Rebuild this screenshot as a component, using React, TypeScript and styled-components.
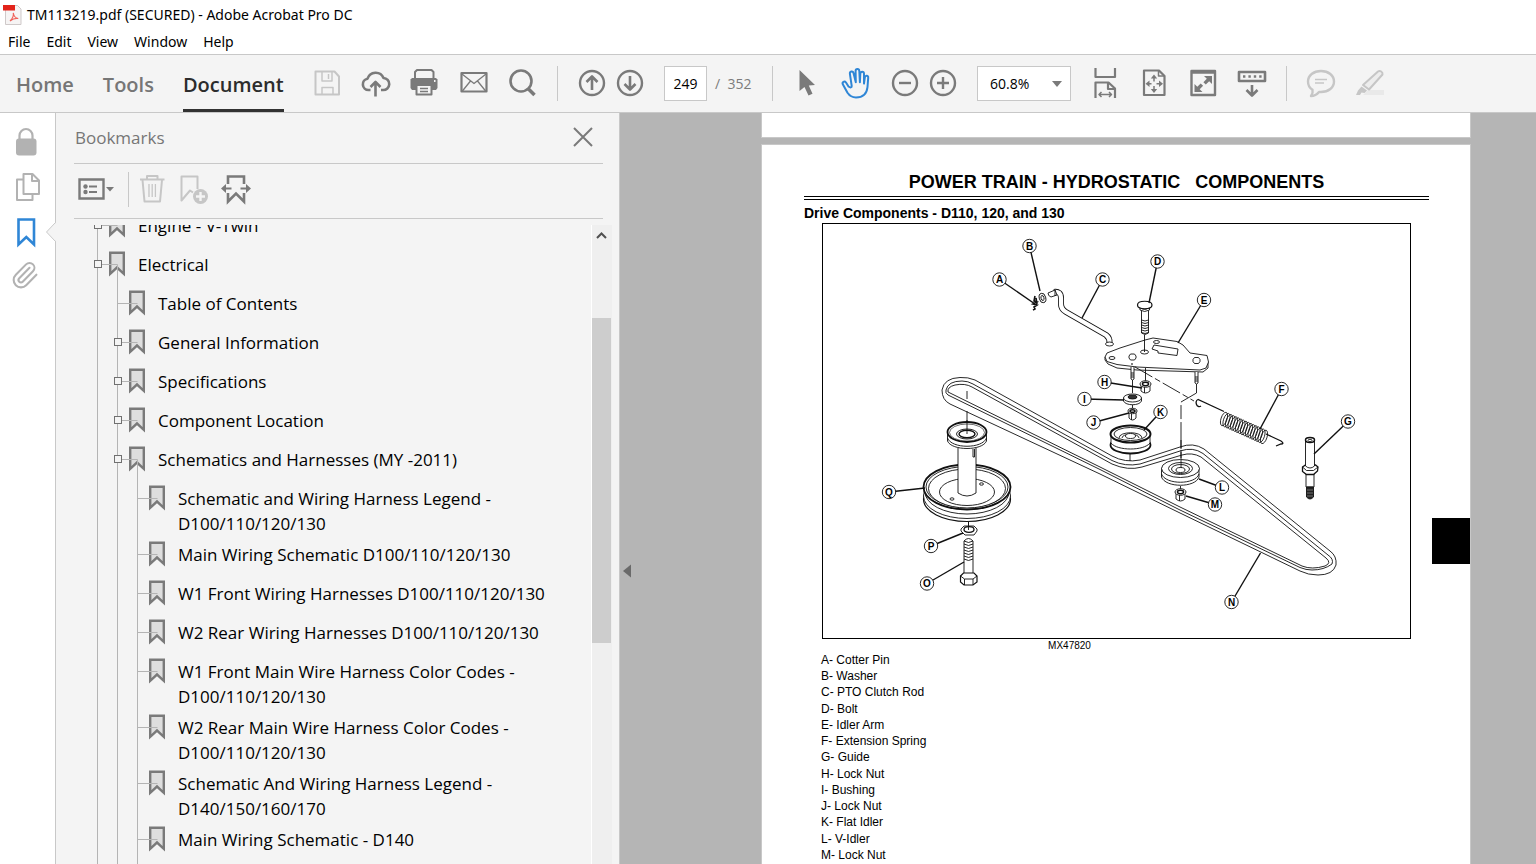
import React from "react";
import styled, { createGlobalStyle } from "styled-components";

const ui = `"Segoe UI", "Open Sans", "Noto Sans", sans-serif`;
const caption = `"Segoe UI", "Noto Sans", sans-serif`;
const doc = `"Liberation Sans", Arial, sans-serif`;
const line = "#c8c8c8";
const ink = "#7a7a7a";
const faint = "#c6c6c6";
const blue = "#2f86d6";
const chrome = "#f4f4f4";

const Global = createGlobalStyle`
  * { box-sizing: border-box; }
  body { margin: 0; background: #fff; font-family: ${ui}; color: #000; }
  button { border: 0; padding: 0; background: none; font: inherit; color: inherit; cursor: pointer; }
  ul { list-style: none; margin: 0; padding: 0; }
  a { color: inherit; text-decoration: none; }
  svg { display: block; }
`;

const Window = styled.div`
  height: 100vh;
  display: flex;
  flex-direction: column;
  overflow: hidden;
`;
const TitleBar = styled.header`
  flex: none;
  display: flex;
  align-items: center;
  gap: 5px;
  height: 30px;
  padding-left: 3px;
  font-family: ${caption};
`;
const Title = styled.h1`
  margin: 0;
  font-size: 14px;
  line-height: 20px;
  font-weight: 400;
  white-space: nowrap;
`;
const MenuBar = styled.nav`
  flex: none;
  display: flex;
  gap: 16px;
  height: 24px;
  padding-left: 8px;
  font-family: ${caption};
  font-size: 14px;
  line-height: 24px;
`;
const Toolbar = styled.div`
  flex: none;
  display: flex;
  align-items: center;
  height: 59px;
  padding-bottom: 1px;
  background: ${chrome};
  border-top: 1px solid ${line};
  border-bottom: 1px solid ${line};
`;
const Tabs = styled.nav`
  flex: 0 0 309px;
  align-self: stretch;
  display: flex;
  gap: 29px;
  padding-left: 16px;
`;
const Tab = styled.button<{ $active?: boolean }>`
  height: 57px;
  padding-top: 5px;
  font-size: 20px;
  font-weight: 600;
  color: ${p => (p.$active ? "#2c2c2c" : "#767676")};
  border-bottom: 3px solid ${p => (p.$active ? "#323232" : "transparent")};
`;
const Group = styled.div<{ $gap: number }>`
  display: flex;
  align-items: center;
  gap: ${p => p.$gap}px;
`;
const ToolButton = styled.button<{ $tone?: string; $width?: number }>`
  width: ${p => p.$width ?? 36}px;
  height: 36px;
  display: flex;
  align-items: center;
  justify-content: center;
  flex: none;
  color: ${p => p.$tone ?? ink};
`;
const Divider = styled.span`
  flex: none;
  width: 1px;
  height: 35px;
  margin: 0 16px;
  background: ${line};
`;
const PageBox = styled.input`
  width: 43px;
  height: 35px;
  margin-left: 16px;
  padding: 0;
  border: 1px solid ${line};
  background: #fff;
  text-align: center;
  font: 14px ${ui};
  color: #000;
`;
const PageTotal = styled.span`
  width: 49px;
  padding-left: 8px;
  font-size: 14px;
  color: #7c7c7c;
  white-space: pre;
`;
const ZoomField = styled.label`
  position: relative;
  width: 94px;
  height: 35px;
  margin: 0 16px;
  svg {
    position: absolute;
    right: 9px;
    top: 15px;
    pointer-events: none;
  }
`;
const ZoomSelect = styled.select`
  appearance: none;
  width: 100%;
  height: 100%;
  padding: 0 12px;
  border: 1px solid ${line};
  border-radius: 0;
  background: #fff;
  font: 14px ${ui};
  color: #000;
`;
const Body = styled.div`
  flex: 1;
  min-height: 0;
  display: flex;
`;
const Rail = styled.nav`
  position: relative;
  flex: 0 0 56px;
  display: flex;
  flex-direction: column;
  gap: 13px;
  padding: 13px 0 0 10px;
  background: #fff;
  border-right: 1px solid ${line};
`;
const RailButton = styled.button<{ $tone?: string }>`
  width: 32px;
  height: 32px;
  color: ${p => p.$tone ?? "#b2b2b2"};
`;
const Notch = styled.svg`
  position: absolute;
  right: -1px;
  top: 109px;
`;
const Panel = styled.aside`
  flex: 0 0 564px;
  display: flex;
  flex-direction: column;
  min-height: 0;
  padding-left: 18px;
  background: ${chrome};
  border-right: 1px solid ${line};
`;
const PanelHeader = styled.div`
  flex: none;
  display: flex;
  align-items: center;
  justify-content: space-between;
  height: 51px;
  margin-right: 16px;
  padding: 0 8px 2px 1px;
  border-bottom: 1px solid ${line};
`;
const PanelTitle = styled.h2`
  margin: 0;
  font-size: 17px;
  font-weight: 400;
  color: #767676;
`;
const PanelTools = styled.div`
  flex: none;
  display: flex;
  align-items: center;
  height: 55px;
  margin: 0 16px 6px 0;
  padding: 0 0 4px 4px;
  border-bottom: 1px solid ${line};
  ${Divider} { margin: 0 7px 0 13px; }
`;
const TreeArea = styled.div`
  flex: 1;
  min-height: 0;
  display: flex;
  margin-right: 7px;
`;
const TreeView = styled.div`
  flex: 1;
  min-width: 0;
  overflow: hidden;
  padding-left: 23px;
  border-right: 1px solid #fff;
`;
const Branch = styled.ul<{ $root?: boolean }>`
  margin: ${p => (p.$root ? "-18px 0 0 0" : "0 0 0 19px")};
  padding-bottom: ${p => (p.$root ? 0 : 20)}px;
  border-left: 1px solid #b4b4b4;
`;
const Item = styled.a`
  display: flex;
  min-height: 39px;
  font-size: 17px;
  line-height: 25px;
`;
const Marker = styled.svg`
  flex: none;
  margin-left: -4px;
`;
const ItemText = styled.span`
  padding: 6px 8px 0 12px;
`;
const ScrollBar = styled.div`
  flex: 0 0 20px;
  background: #efefef;
`;
const ScrollUp = styled.button`
  display: block;
  height: 22px;
  width: 19px;
`;
const Thumb = styled.div`
  width: 19px;
  height: 325px;
  margin-top: 71px;
  background: #cdcdcd;
`;
const Viewer = styled.main`
  flex: 1;
  min-width: 0;
  display: flex;
  background: #b5b5b5;
`;
const Handle = styled.button`
  flex: 0 0 14px;
  align-self: flex-start;
  height: 28px;
  margin-top: 444px;
`;
const Pages = styled.div`
  flex: 1;
  min-width: 0;
  display: flex;
  flex-direction: column;
  gap: 6px;
  padding: 0 65px 0 127px;
`;
const PreviousPage = styled.div`
  flex: none;
  height: 25px;
  background: #fff;
  border: 1px solid ${line};
  border-top: 0;
`;
const Page = styled.article`
  position: relative;
  flex: none;
  min-height: 900px;
  padding: 25px 41px 0 42px;
  background: #fff;
  border: 1px solid ${line};
  font-family: ${doc};
`;
const PageHeading = styled.h2`
  margin: 0;
  font-size: 18px;
  line-height: 24px;
  font-weight: 700;
  text-align: center;
  white-space: pre;
`;
const DoubleRule = styled.div`
  height: 4px;
  margin: 2px 0 4px;
  border-top: 1px solid #000;
  border-bottom: 1px solid #000;
`;
const SubHeading = styled.h3`
  margin: 0 0 1px;
  font-size: 14px;
  line-height: 18px;
  font-weight: 700;
`;
const Figure = styled.figure`
  margin: 0 18px;
  svg {
    width: 100%;
    height: auto;
    border: 1px solid #000;
  }
  figcaption {
    padding-right: 94px;
    font-size: 10px;
    line-height: 13px;
    text-align: center;
  }
`;
const PartList = styled.ul`
  display: grid;
  grid-auto-rows: 1fr;
  min-height: 211px;
  margin-left: 17px;
  font-size: 12px;
  line-height: 16px;
`;
const IndexTab = styled.span`
  position: absolute;
  right: 0;
  top: 373px;
  width: 38px;
  height: 46px;
  background: #000;
`;

const Icon = ({ children, w = 2.4, size = 32 }: { children: React.ReactNode; w?: number; size?: number }) => (
  <svg width={size} height={size} viewBox="0 0 32 32" fill="none" stroke="currentColor" strokeWidth={w} strokeLinejoin="round" aria-hidden="true">
    {children}
  </svg>
);

const PdfLogo = () => (
  <svg width="19" height="20" viewBox="0 0 19 20" aria-hidden="true">
    <path d="M2.500.5h12l3.500 3.500v15.500H2.500z" fill="#f6f4f4" stroke="#cfc9c9" />
    <path d="M0 0h12v5.500H0z" fill="#e2231a" />
    <path d="M7 16c2-2 4-5 3.300-8 .4 3 2 5 5 5.500-3-.5-5.500.3-8.300 2.500z" fill="none" stroke="#f0625a" strokeWidth="1.200" />
  </svg>
);
const Save = () => (
  <Icon w={2}>
    <path d="M4.500 4.500h19l4.500 5v18h-23.500z" />
    <path d="M11 5v9h10V5M17.500 7v5M11 27v-6.500h11V27" strokeWidth="1.500" />
  </Icon>
);
const Cloud = () => (
  <Icon w={2.600}>
    <path d="M10.500 23H8.500a5.700 5.700 0 0 1-1-11.300A8.500 8.500 0 0 1 23.500 11a6 6 0 0 1-.5 12h-2" />
    <path d="M15.500 29.500V15.500M10.500 20l5-5 5 5" />
  </Icon>
);
const Printer = () => (
  <Icon w={2}>
    <path d="M6 11V5l2-2h14.500L24.500 5v6" />
    <path d="M3 11h24l1.500 1.500V21L27 23H3l-1.500-2v-8.500z" fill="currentColor" stroke="none" />
    <path d="M7.500 18h15v9.500h-15z" fill={chrome} />
    <path d="M11 21.500h8M11 24.500h8" strokeWidth="1.300" />
    <path d="M25 14h1.500" stroke={chrome} />
  </Icon>
);
const Mail = () => (
  <Icon w={2.200}>
    <path d="M3.500 6h25v18.500h-25z" />
    <path d="M4 7l12 9.500L28 7M4 24.500l8.500-10.500M28 24.500L19.500 14" strokeWidth="1.300" />
  </Icon>
);
const Search = () => (
  <Icon w={2.600}>
    <circle cx="14" cy="14" r="10.500" />
    <path d="M21 21.500l6.500 6.500" strokeWidth="3.600" />
  </Icon>
);
const ArrowUp = () => (
  <Icon>
    <circle cx="16" cy="16" r="12" />
    <path d="M16 23V9.500M10.500 15L16 9.500l5.500 5.500" strokeWidth="2.600" />
  </Icon>
);
const ArrowDown = () => (
  <Icon>
    <circle cx="16" cy="16" r="12" />
    <path d="M16 9v13.500M10.500 17l5.500 5.500 5.500-5.500" strokeWidth="2.600" />
  </Icon>
);
const Pointer = () => (
  <Icon>
    <path d="M8.500 3v21l5-4 4 8.500 4-1.700-3.700-8.300 6.200-.5z" fill="currentColor" stroke="none" />
  </Icon>
);
const Hand = () => (
  <Icon w={2}>
    <path d="M8.500 19.500l-2.500-4c-1.500-2-4.200-.5-3.200 1.800l4.700 8.500c2 3 4 4.700 8.500 4.700 6.500 0 10.800-3.500 11.500-10.500l.7-9.200c.2-2.500-3-2.800-3.400-.3l-.8 6v-9.700c0-2.700-3.500-2.700-3.700 0l-.4 8.500-.6-11.300c-.2-2.600-3.700-2.500-3.700.2l.2 11-2.300-9.200c-.6-2.500-4-1.800-3.600.8l1.800 12c.2 1.800-1.200 2.200-3.200.7z" />
  </Icon>
);
const ZoomOut = () => (
  <Icon>
    <circle cx="16" cy="16" r="12" />
    <path d="M10 16h12" />
  </Icon>
);
const ZoomIn = () => (
  <Icon>
    <circle cx="16" cy="16" r="12" />
    <path d="M10 16h12M16 10v12" />
  </Icon>
);
const FitWidth = () => (
  <Icon w={2.200}>
    <path d="M6.500 1v9h19.500V1M6.500 31V15.500h13l6.500 6V31M19 16v6h7" />
    <path d="M10 27.500h12.500M12.500 25L10 27.500l2.500 2.500M20 25l2.500 2.500L20 30" strokeWidth="1.500" />
  </Icon>
);
const FitPage = () => (
  <Icon w={2.200}>
    <path d="M6 3.500h15l5.500 5.500v19H6z" />
    <path d="M20.500 3.500V9h6" strokeWidth="1.500" />
    <path d="M16 10v4.500M16 19v5M9 16.700h4.500M18.500 16.700h5" strokeWidth="1.500" />
    <path d="M16 7.500l3.200 4h-6.400zM16 26l3.200-4h-6.400zM7.500 16.700l4-3.200v6.400zM25 16.700l-4-3.200v6.400z" fill="currentColor" stroke="none" />
  </Icon>
);
const FullScreen = () => (
  <Icon w={2.400}>
    <path d="M4.500 4h23.500v24H4.500z" />
    <path d="M4 5.500h24" strokeWidth="2.500" />
    <path d="M25 9v8l-2.800-2.800-3.400 3.400-2.400-2.400 3.400-3.400L17 9zM7.500 25v-8l2.800 2.800 3.400-3.400 2.400 2.400-3.400 3.400 2.800 2.800z" fill="currentColor" stroke="none" />
  </Icon>
);
const Keyboard = () => (
  <Icon w={2.600}>
    <path d="M3 5h26v9H3z" />
    <path d="M7 9.500h19" strokeDasharray="2.400 3" />
    <path d="M16 18v10M10.500 23l5.500 5.500 5.500-5.500" />
  </Icon>
);
const Comment = () => (
  <Icon>
    <path d="M16 4c7.500 0 13 4.500 13 10.500S23.500 25 16 25l-2 0c-2 2.500-4.500 4-8 4 1.500-2 2-4 1.500-6.200C4.500 21 3 18 3 14.500 3 8.500 8.500 4 16 4z" />
    <path d="M10 12.500h12M10 16h9" strokeWidth="1.500" />
  </Icon>
);
const Highlighter = () => (
  <Icon w={2}>
    <path d="M14 23h16v5H9z" fill="#e9e9e9" stroke="none" />
    <path d="M24 4.500c2-1.500 5 .5 4.500 3L15 22.500l-6-4.500z" fill="#ededed" />
    <path d="M7.500 19.500l5.500 4-2.500 2.500-3-.5-1.500 2.500H2l2-4.500z" fill="currentColor" stroke="none" />
  </Icon>
);
const Lock = () => (
  <Icon w={2.200}>
    <path d="M9.500 13V9.500a6.500 6.500 0 0 1 13 0V13" />
    <rect x="6" y="12.500" width="20.500" height="17" rx="3" fill="currentColor" stroke="none" />
  </Icon>
);
const Copy = () => (
  <Icon w={2}>
    <path d="M13.500 3h9l6.500 6.500v13.500H13.500z" />
    <path d="M22 3v7h7M13 8.500H7v20.500h15.500v-5" />
  </Icon>
);
const BookmarkOutline = () => (
  <Icon w={2.600}>
    <path d="M8.500 3.500h15.500v25l-7.700-7.500-7.800 7.500z" strokeLinejoin="miter" />
  </Icon>
);
const Clip = () => (
  <Icon w={1.700}>
    <g transform="translate(0 -.5) scale(1.220)" strokeLinecap="round">
      <path d="m16 6-8.414 8.586a2 2 0 0 0 2.829 2.829l8.414-8.586a4 4 0 1 0-5.657-5.657l-8.379 8.551a6 6 0 1 0 8.485 8.485l8.379-8.551" />
    </g>
  </Icon>
);
const ListOptions = () => (
  <svg width="37" height="32" viewBox="0 0 37 32" fill="none" stroke="currentColor" strokeWidth="2.400" aria-hidden="true">
    <path d="M1.500 6.500h24v19h-24z" />
    <path d="M11 13.500h8M11 19h8" strokeWidth="1.800" />
    <circle cx="7.500" cy="13.500" r="2.200" fill="currentColor" stroke="none" />
    <circle cx="7.500" cy="19" r="2.200" fill="currentColor" stroke="none" />
    <path d="M28 14h8l-4 4.500z" fill="currentColor" stroke="none" />
  </svg>
);
const Trash = () => (
  <Icon w={2}>
    <path d="M4 6.500h24.500M6.500 7l2 21.500h15.500L26 7M11 6V3h10.500v3" />
    <path d="M13 11v13M16.200 11v13M19.400 11v13" strokeWidth="1.300" />
  </Icon>
);
const BookmarkAdd = () => (
  <Icon w={2}>
    <path d="M15 19.500l-3-2-8.500 10V3.500h16V16" />
    <circle cx="22.500" cy="23.500" r="7.500" fill="currentColor" stroke="none" />
    <path d="M22.500 19v9M18 23.500h9" stroke={chrome} strokeWidth="2.400" />
  </Icon>
);
const BookmarkExpand = () => (
  <Icon w={2.600}>
    <path d="M8 11V3.500h16V11M8 20v8.500l8-8 8 8V20" strokeLinejoin="miter" />
    <path d="M5 15.500h6.500M20.500 15.500H27" strokeWidth="2.200" />
    <path d="M1 15.500l5-4.500v9zM31 15.500L26 11v9z" fill="currentColor" stroke="none" />
  </Icon>
);

type Node = { label: string; leaf?: boolean; children?: Node[] };
const leaf = (label: string): Node => ({ label, leaf: true });
const bookmarks: Node[] = [
  { label: "Engine - V-Twin" },
  {
    label: "Electrical",
    children: [
      leaf("Table of Contents"),
      { label: "General Information" },
      { label: "Specifications" },
      { label: "Component Location" },
      {
        label: "Schematics and Harnesses (MY -2011)",
        children: [
          leaf("Schematic and Wiring Harness Legend - D100/110/120/130"),
          leaf("Main Wiring Schematic D100/110/120/130"),
          leaf("W1 Front Wiring Harnesses D100/110/120/130"),
          leaf("W2 Rear Wiring Harnesses D100/110/120/130"),
          leaf("W1 Front Main Wire Harness Color Codes - D100/110/120/130"),
          leaf("W2 Rear Main Wire Harness Color Codes - D100/110/120/130"),
          leaf("Schematic And Wiring Harness Legend - D140/150/160/170"),
          leaf("Main Wiring Schematic - D140"),
        ],
      },
    ],
  },
];

const Tree = ({ nodes, root }: { nodes: Node[]; root?: boolean }) => (
  <Branch $root={root}>
    {nodes.map(node => (
      <li key={node.label}>
        <Item href="#">
          <Marker width="32" height="39" viewBox="0 0 32 39" fill="none" aria-hidden="true">
            <path d="M16.200 6.800h13.600v21l-6.800-6.300-6.800 6.300z" fill="#dedede" stroke={ink} strokeWidth="2.400" />
            <path d={node.children ? "M4 18.500H23.500V39" : "M4 18.500H23.500"} stroke="#b4b4b4" />
            {!node.leaf && <rect x=".5" y="14.500" width="7" height="7" fill={chrome} stroke="#707070" />}
          </Marker>
          <ItemText>{node.label}</ItemText>
        </Item>
        {node.children && <Tree nodes={node.children} />}
      </li>
    ))}
  </Branch>
);

type Callout = [string, number, number, number, number];
const callouts: Callout[] = [
  ["A", 999.5, 279.5, 1035, 304], ["B", 1029.5, 246, 1040, 291], ["C", 1102.5, 279.5, 1082, 318],
  ["D", 1157.5, 261.5, 1149, 303], ["E", 1204, 300, 1178, 343], ["F", 1281.5, 389, 1260, 429],
  ["G", 1348, 421.5, 1314, 454], ["H", 1104.5, 382, 1142, 388], ["I", 1084.5, 399, 1124, 400],
  ["J", 1093.5, 422.5, 1129, 413], ["K", 1160.5, 412, 1144, 430], ["L", 1222, 487.5, 1199, 479],
  ["M", 1215, 504.5, 1186, 496], ["N", 1231.5, 602, 1260.5, 553], ["O", 927, 583.5, 964, 562],
  ["P", 931, 546, 963, 533], ["Q", 889, 492, 925, 488],
];

const Nut = ({ x, y, r = 5 }: { x: number; y: number; r?: number }) => (
  <g>
    <path d={`M${x - r + 1} ${y}v7q${r - 1} 4 ${2 * r - 2} 0v-7zM${x - 1} ${y + 3}v6`} />
    <ellipse cx={x} cy={y} rx={r} ry={r * 0.6} />
    <ellipse cx={x} cy={y} rx={r * 0.55} ry={r * 0.3} strokeWidth="1.500" />
  </g>
);
const coils = Array.from({ length: 17 }, (_, i) => i);
const threads = [0, 1, 2, 3, 4, 5];

const Diagram = () => (
  <svg viewBox="823 224 587 414" fill="#fff" stroke="#111" strokeWidth=".9" role="img" aria-label="Exploded view of the drive components">
    {/* drive belt */}
    <path d="M960 377.500Q968 377 975 380L1112 456Q1125 463 1140 460L1180 447Q1193 442 1204 449L1330 551Q1337 556 1336 565Q1333 575 1318 575Q1308 575 1300 571L1180 513L1100 474L950 404Q942 400 942 390Q944 378 960 377.500z" />
    <path d="M946 390Q948 381 962 381Q968 381 973 384L1112 460.500Q1125 467 1140 464L1180 451Q1193 446.500 1203 453.500L1328 555Q1334 559 1332 564Q1324 570 1312 570Q1306 570 1300 567.500L1180 510L1100 469.500L948 395Q945 393 946 390z" />
    <path d="M948 392Q947 387 955 385Q965 383 972 387L1112 464Q1128 471 1142 467L1182 455Q1192 452 1201 457L1326 558Q1332 563 1325 566Q1312 570 1302 566L1180 507L1100 467z" />
    {/* cotter pin and washer */}
    <path d="M1035 296l-1 5 3 1-4 2 4 1-3 2 1 2-2 1M1036 298l1 6" fill="none" strokeWidth="1.600" />
    <ellipse cx="1042.500" cy="298" rx="3.200" ry="4.800" transform="rotate(-15 1042.500 298)" />
    <ellipse cx="1042.500" cy="298" rx="1.500" ry="2.500" transform="rotate(-15 1042.500 298)" />
    {/* clutch rod */}
    <path d="M1054 292Q1061 291 1061 298V304Q1061 309 1066 312L1106 335Q1110 338 1109.500 343" fill="none" strokeWidth="6" />
    <path d="M1054 292Q1061 291 1061 298V304Q1061 309 1066 312L1106 335Q1110 338 1109.500 343" fill="none" stroke="#fff" strokeWidth="4.300" />
    <path d="M1048 293l7-3 2 5-6 2q-3-1-3-4zM1055 290v6" />
    <ellipse cx="1109.500" cy="344" rx="4" ry="2" />
    {/* bolt D */}
    <path d="M1141.500 308v25q3.500 3 7 0v-25z" />
    {threads.map(i => <path key={i} d={`M1141.500 ${320 + i * 2.500}q3.500 2 7 0`} fill="none" />)}
    <path d="M1140 307q4.500 5 9.500 0v3q-5 3-9.500 0z" />
    <path d="M1137.500 305c0-5 14.500-5 14.500 0s-14.500 5-14.500 0z" strokeWidth="1.200" />
    {/* idler arm */}
    <path d="M1105 357v3l3 4 9 4 20 2 66 2 5-4v-6z" />
    <path d="M1105 357l2-4 13-5 25-8 8-2 24 3.500 6 3.500 7 8 17 2.500 1.500 6.500-2.500 6-6 2-63-3-20-2.500-10-3z" />
    <path d="M1152 349l2-4 24 4-1 6.500-19-2.500v-2z" />
    <ellipse cx="1112" cy="358" rx="3" ry="1.500" />
    <ellipse cx="1156.500" cy="342" rx="3" ry="1.500" />
    <ellipse cx="1144.500" cy="352" rx="4" ry="2" />
    <circle cx="1132" cy="364" r=".5" />
    <path d="M1129 356l1.500-2h4l1.500 2v2l-1.500 2h-4l-1.500-2zM1193 359.500l1.500-2h4l1.500 2v2l-1.500 2h-4l-1.500-2z" />
    <path d="M1131 367v12q1.500 2 3 0v-12M1195 372v11q1.500 2 3 0v-11" />
    <path d="M1131 375h3M1131 377h3M1195 379h3M1195 381h3M1131 373h3M1195 377h3" />
    {/* assembly axes */}
    <path d="M1144.500 335v17M1145.500 368v13M1132.500 380v13M1132.500 404v5M1130 454v7M967 391v8M967 411v10M968.500 522v6" fill="none" />
    <path d="M1135 367L1194 401" fill="none" strokeDasharray="20 3 6 3" />
    <path d="M1196.500 384v9L1181 402v62" fill="none" strokeDasharray="27 3 14 3" />
    {/* nut, bushing, nut */}
    <Nut x={1145.500} y={384} r={5.500} />
    <path d="M1123.500 398v3c2 5 16 5 18 0v-3z" />
    <ellipse cx="1132.500" cy="398" rx="9" ry="4" />
    <ellipse cx="1132.500" cy="397" rx="4.500" ry="2" fill="#333" />
    <Nut x={1132.500} y={411} r={4.500} />
    {/* flat idler */}
    <ellipse cx="1130.500" cy="445" rx="20" ry="8.500" strokeWidth="1.800" />
    <path d="M1111 443v-7h39v7c-6 8-33 8-39 0z" />
    <ellipse cx="1130.500" cy="434" rx="20" ry="8.500" strokeWidth="2" />
    <ellipse cx="1130.500" cy="434" rx="16.500" ry="6.500" />
    <path d="M1119 438c0-7 23-7 23 0M1122 438c0-5 17-5 17 0" />
    <ellipse cx="1130.500" cy="436" rx="5" ry="2.500" />
    {/* v idler */}
    <path d="M1161.500 468v9c4 11 34 11 37.500 0v-9z" />
    <path d="M1161.500 474c4 11 34 11 37.500 0" fill="none" />
    <ellipse cx="1180.500" cy="468.500" rx="19" ry="9" />
    <ellipse cx="1180.500" cy="468.500" rx="12" ry="6" />
    <ellipse cx="1180.500" cy="469" rx="9" ry="4.500" />
    <ellipse cx="1180.500" cy="470" rx="4.500" ry="2.500" />
    <path d="M1181 440v30" strokeDasharray="8 2" />
    <path d="M1180.500 486v4" />
    <Nut x={1180.500} y={492} r={5.500} />
    {/* extension spring */}
    <path d="M1201 406c-4 3-7-5-3-6.500l26 12M1266 434l15 7c3 2 2 3 0 3l-5 2" fill="none" strokeWidth="1.300" />
    {coils.map(i => (
      <ellipse key={i} cx={1224 + i * 2.500} cy={419 + i * 1.120} rx="3" ry="7" fill="none" strokeWidth=".8" transform={`rotate(18 ${1224 + i * 2.500} ${419 + i * 1.120})`} />
    ))}
    {/* guide */}
    <path d="M1306 474h8v13h-8z" />
    <path d="M1306.500 487h7v10q-3.500 4-7 0z" fill="#222" />
    <path d="M1307 490h6M1307 493h6M1307 496h6" stroke="#aaa" strokeWidth=".6" />
    <path d="M1302.500 467l3-2h10l2.500 2-.5 4-4 3.500h-7l-4-3z" strokeWidth="1.300" />
    <path d="M1302.500 467l4 3.500h7l4.500-3.500" fill="none" />
    <path d="M1305.500 440v26q4.500 4 9 0v-26z" />
    <ellipse cx="1310" cy="440" rx="4.500" ry="2.500" strokeWidth="1.500" />
    <ellipse cx="1310" cy="440.500" rx="2" ry="1.200" />
    {/* crank pulley */}
    <ellipse cx="967" cy="499" rx="43.500" ry="22.500" strokeWidth="1.200" />
    <ellipse cx="967" cy="496" rx="43.500" ry="22.500" />
    <ellipse cx="967" cy="492" rx="42" ry="22" />
    <ellipse cx="967" cy="487" rx="43.500" ry="22.500" strokeWidth="1.800" />
    <ellipse cx="967" cy="487" rx="41" ry="20.500" />
    <ellipse cx="967" cy="488.500" rx="38.500" ry="19.500" />
    <ellipse cx="967" cy="492" rx="27.500" ry="13.500" />
    <ellipse cx="981.500" cy="484" rx="2" ry="1.200" />
    <ellipse cx="952" cy="499" rx="2" ry="1.200" />
    <path d="M958 444v49q9 6 18 0v-49z" />
    <path d="M973 449v8h1.500v-8" />
    <path d="M947.500 433v8c4 10 35 10 39 0v-8z" />
    <path d="M947.500 438c4 11 35 11 39 0" fill="none" />
    <ellipse cx="967" cy="432" rx="19.500" ry="10" strokeWidth="1.800" />
    <ellipse cx="967" cy="432.500" rx="17.500" ry="8.500" strokeWidth=".6" />
    <ellipse cx="967" cy="434" rx="10.500" ry="5" />
    <ellipse cx="967" cy="434" rx="8" ry="3.800" strokeWidth="1.400" />
    <path d="M967 420v14" />
    {/* washer P and bolt O */}
    <path d="M961 529l3-3h10l3 3v2l-3 4h-9l-4-4z" />
    <ellipse cx="969" cy="529.500" rx="5" ry="2.800" strokeWidth="1.300" />
    <path d="M968.500 522v8" />
    <path d="M964 541q4.500-5 9 0v33h-9z" />
    {[541, 544, 547, 550, 553, 556, 559].map(y => <path key={y} d={`M964 ${y}q4.500 3 9 0`} fill="none" />)}
    <path d="M960.500 576l3-3h10.500l3 3v6l-4 3h-9l-3.500-3z" strokeWidth="1.200" />
    <path d="M960.500 576l4 3h8.500l4-3M964.500 579v6M973 579v6" fill="none" />
    {/* callouts */}
    {callouts.map(([name, x, y, tx, ty]) => (
      <g key={name}>
        <path d={`M${x} ${y}L${tx} ${ty}`} strokeWidth="1.400" />
        <circle cx={x} cy={y} r="6.700" />
        <text x={x} y={y + 3.500} textAnchor="middle" fontFamily={doc} fontSize="10" fontWeight="700" fill="#000" stroke="none">
          {name}
        </text>
      </g>
    ))}
  </svg>
);

const parts = [
  "A- Cotter Pin", "B- Washer", "C- PTO Clutch Rod", "D- Bolt", "E- Idler Arm", "F- Extension Spring", "G- Guide",
  "H- Lock Nut", "I- Bushing", "J- Lock Nut", "K- Flat Idler", "L- V-Idler", "M- Lock Nut",
];

export default function App() {
  return (
    <Window>
      <Global />
      <TitleBar>
        <PdfLogo />
        <Title>TM113219.pdf (SECURED) - Adobe Acrobat Pro DC</Title>
      </TitleBar>
      <MenuBar>
        {["File", "Edit", "View", "Window", "Help"].map(m => <button key={m}>{m}</button>)}
      </MenuBar>
      <Toolbar>
        <Tabs>
          <Tab>Home</Tab>
          <Tab>Tools</Tab>
          <Tab $active>Document</Tab>
        </Tabs>
        <Group $gap={13}>
          <ToolButton $tone={faint} aria-label="Save"><Save /></ToolButton>
          <ToolButton aria-label="Upload"><Cloud /></ToolButton>
          <ToolButton aria-label="Print"><Printer /></ToolButton>
          <ToolButton aria-label="Email"><Mail /></ToolButton>
          <ToolButton aria-label="Find"><Search /></ToolButton>
        </Group>
        <Divider />
        <Group $gap={2}>
          <ToolButton aria-label="Previous page"><ArrowUp /></ToolButton>
          <ToolButton aria-label="Next page"><ArrowDown /></ToolButton>
        </Group>
        <PageBox aria-label="Page number" defaultValue="249" />
        <PageTotal>/  352</PageTotal>
        <Divider />
        <Group $gap={13}>
          <ToolButton aria-label="Select"><Pointer /></ToolButton>
          <ToolButton $tone={blue} aria-label="Pan"><Hand /></ToolButton>
          <Group $gap={2}>
            <ToolButton aria-label="Zoom out"><ZoomOut /></ToolButton>
            <ToolButton aria-label="Zoom in"><ZoomIn /></ToolButton>
          </Group>
        </Group>
        <ZoomField>
          <ZoomSelect aria-label="Zoom level" defaultValue="60.8%">
            <option>60.8%</option>
          </ZoomSelect>
          <svg width="10" height="6" viewBox="0 0 10 6" fill={ink} aria-hidden="true"><path d="M0 0h10L5 6z" /></svg>
        </ZoomField>
        <Group $gap={13}>
          <ToolButton aria-label="Fit width"><FitWidth /></ToolButton>
          <ToolButton aria-label="Fit page"><FitPage /></ToolButton>
          <ToolButton aria-label="Full screen"><FullScreen /></ToolButton>
          <ToolButton aria-label="Show toolbar"><Keyboard /></ToolButton>
        </Group>
        <Divider />
        <Group $gap={13}>
          <ToolButton $tone={faint} aria-label="Comment"><Comment /></ToolButton>
          <ToolButton $tone={faint} aria-label="Highlight"><Highlighter /></ToolButton>
        </Group>
      </Toolbar>
      <Body>
        <Rail>
          <RailButton aria-label="Security"><Lock /></RailButton>
          <RailButton aria-label="Thumbnails"><Copy /></RailButton>
          <RailButton $tone={blue} aria-label="Bookmarks"><BookmarkOutline /></RailButton>
          <RailButton aria-label="Attachments"><Clip /></RailButton>
          <Notch width="10" height="20" viewBox="0 0 10 20" aria-hidden="true">
            <path d="M10 .5L.5 10l9.500 9.500z" fill={chrome} />
            <path d="M9.500.5L.5 10l9 9.500" fill="none" stroke={line} />
          </Notch>
        </Rail>
        <Panel>
          <PanelHeader>
            <PanelTitle>Bookmarks</PanelTitle>
            <button aria-label="Close panel">
              <svg width="24" height="24" viewBox="0 0 24 24" fill="none" stroke={ink} strokeWidth="2" aria-hidden="true">
                <path d="M3 3l18 18M21 3L3 21" />
              </svg>
            </button>
          </PanelHeader>
          <PanelTools>
            <ToolButton $width={37} aria-label="Options"><ListOptions /></ToolButton>
            <Divider />
            <Group $gap={10}>
              <ToolButton $width={32} $tone={faint} aria-label="Delete bookmark"><Trash /></ToolButton>
              <ToolButton $width={32} $tone={faint} aria-label="New bookmark"><BookmarkAdd /></ToolButton>
              <ToolButton $width={32} aria-label="Expand current bookmark"><BookmarkExpand /></ToolButton>
            </Group>
          </PanelTools>
          <TreeArea>
            <TreeView>
              <Tree nodes={bookmarks} root />
            </TreeView>
            <ScrollBar>
              <ScrollUp aria-label="Scroll up">
                <svg width="19" height="22" viewBox="0 0 19 22" fill="none" stroke="#505050" strokeWidth="2" aria-hidden="true">
                  <path d="M5 13l4.500-4.500L14 13" />
                </svg>
              </ScrollUp>
              <Thumb />
            </ScrollBar>
          </TreeArea>
        </Panel>
        <Viewer>
          <Handle aria-label="Collapse panel">
            <svg width="14" height="28" viewBox="0 0 14 28" fill="#6a6a6a" aria-hidden="true"><path d="M11 7.500v13L3 14z" /></svg>
          </Handle>
          <Pages>
            <PreviousPage />
            <Page>
              <PageHeading>{"POWER TRAIN - HYDROSTATIC   COMPONENTS"}</PageHeading>
              <DoubleRule />
              <SubHeading>Drive Components - D110, 120, and 130</SubHeading>
              <Figure>
                <Diagram />
                <figcaption>MX47820</figcaption>
              </Figure>
              <PartList>
                {parts.map(p => <li key={p}>{p}</li>)}
              </PartList>
              <IndexTab />
            </Page>
          </Pages>
        </Viewer>
      </Body>
    </Window>
  );
}
